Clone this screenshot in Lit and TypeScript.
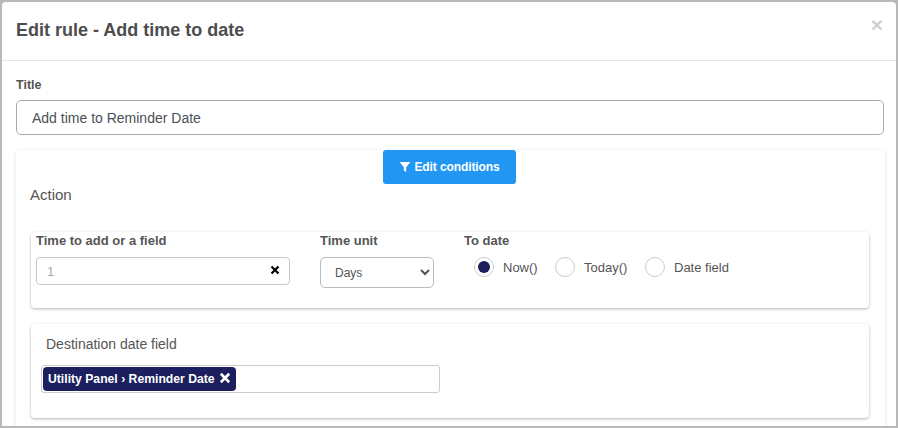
import { LitElement, html, css } from "lit";
import { customElement } from "lit/decorators.js";

@customElement("app-root")
export class AppRoot extends LitElement {
  static styles = css`
    :host {
      display: block;
      width: 898px;
      height: 428px;
      box-sizing: border-box;
      overflow: hidden;
      background: #b9b9b9;
      padding: 2px 2px 2px 2px;
      font-family: "Liberation Sans", Arial, sans-serif;
      color: #555;
    }
    * { box-sizing: border-box; }
    .modal {
      height: 424px;
      background: #fff;
      border-radius: 4px 4px 0 0;
      overflow: hidden;
    }
    .header {
      height: 59px;
      border-bottom: 1px solid #e5e5e5;
      display: flex;
      justify-content: space-between;
      align-items: flex-start;
      padding: 0 13px 0 14px;
    }
    h4 {
      margin: 18px 0 0;
      font-size: 18px;
      line-height: 20px;
      font-weight: 700;
      color: #4d4d4d;
    }
    .close {
      margin-top: 12px;
      font-size: 21px;
      line-height: 21px;
      font-weight: 700;
      color: #cfcfcf;
    }
    .body { padding: 16px 12px 0 14px; }
    .title-label {
      font-size: 12.5px;
      line-height: 16px;
      font-weight: 700;
      color: #555;
      margin-bottom: 7px;
    }
    .title-input {
      height: 35px;
      border: 1px solid #aaa;
      border-radius: 5px;
      padding-left: 15px;
      display: flex;
      align-items: center;
      font-size: 14px;
      color: #495057;
      margin-bottom: 15px;
    }
    .outer {
      height: 300px;
      border-radius: 4px;
      box-shadow: 0 1px 4px rgba(0,0,0,.12);
      padding: 0 16px 0 15px;
      margin-right: -1px;
    }
    .btn-row { display: flex; justify-content: center; }
    .btn {
      width: 133px;
      height: 34px;
      margin-left: -1px;
      background: #2196f3;
      color: #fff;
      border-radius: 3px;
      font-size: 12px;
      letter-spacing: -0.1px;
      font-weight: 700;
      display: flex;
      align-items: center;
      justify-content: center;
      gap: 3px;
    }
    .btn svg { width: 12px; height: 12px; }
    .action {
      font-size: 15px;
      line-height: 16px;
      color: #555;
      margin-top: 3px;
      margin-bottom: 29px;
      margin-left: -1px;
    }
    .card {
      border-radius: 4px;
      box-shadow: 0 1px 3px rgba(0,0,0,.3);
    }
    .card1 {
      height: 76px;
      padding: 1px 5px 0;
      display: flex;
      margin-bottom: 16px;
    }
    .lbl {
      font-size: 13px;
      line-height: 16px;
      font-weight: 700;
      color: #555;
      margin-bottom: 8px;
    }
    .col1 { width: 284px; }
    .col2 { width: 144px; }
    .text-input {
      width: 254px;
      height: 28px;
      border: 1px solid #c8c8c8;
      border-radius: 4px;
      padding: 0 9px 0 10px;
      display: flex;
      align-items: center;
      justify-content: space-between;
      font-size: 13px;
      color: #aaa;
    }
    .clear { color: #000; display: flex; }
    .clear svg { width: 10px; height: 10px; margin-top: -3px; }
    select {
      width: 114px;
      height: 31px;
      border: 1px solid #b4bcc4;
      border-radius: 5px;
      padding-left: 10px;
      background: #fff;
      font-family: inherit;
      font-size: 12px;
      color: #555;
      display: block;
    }
    .radios {
      display: flex;
      align-items: center;
      padding-left: 10px;
      margin-top: 0;
      font-size: 13px;
      color: #555;
    }
    .radio {
      width: 20px;
      height: 20px;
      border-radius: 50%;
      border: 1px solid #ccc;
      display: flex;
      align-items: center;
      justify-content: center;
      margin-right: 9px;
      flex: none;
    }
    .radio i {
      width: 12px;
      height: 12px;
      border-radius: 50%;
      background: #1b1f5e;
      display: block;
    }
    .r1 { width: 35px; margin-right: 17px; }
    .r2 { width: 44px; margin-right: 17px; }
    .card2 {
      height: 94px;
      padding: 12px 10px 0;
    }
    .dest {
      font-size: 14px;
      line-height: 16px;
      color: #555;
      padding-left: 5px;
      margin-bottom: 13px;
    }
    .tags {
      width: 399px;
      height: 28px;
      border: 1px solid #ccc;
      border-radius: 3px;
      padding: 1px;
      display: flex;
    }
    .tag {
      width: 193px;
      height: 24px;
      background: #1b1f5e;
      color: #fff;
      border-radius: 4px;
      padding-left: 5px;
      display: flex;
      align-items: center;
      gap: 4px;
      font-size: 12.2px;
      font-weight: 700;
      white-space: nowrap;
    }
    .tag svg { width: 12px; height: 12px; margin-top: -2px; }
  `;

  render() {
    const x = html`<svg viewBox="0 0 10 10"><path d="M1.5 1.5L8.5 8.5M8.5 1.5L1.5 8.5" stroke="currentColor" stroke-width="2.2" fill="none"/></svg>`;
    return html`
      <div class="modal">
        <div class="header">
          <h4>Edit rule - Add time to date</h4>
          <span class="close">×</span>
        </div>
        <div class="body">
          <div class="title-label">Title</div>
          <div class="title-input">Add time to Reminder Date</div>
          <div class="outer">
            <div class="btn-row">
              <div class="btn">
                <svg viewBox="0 0 12 12"><path d="M.6 1h10.8L7.2 6.2V11L4.8 9.4V6.2z" fill="#fff"/></svg>
                <span>Edit conditions</span>
              </div>
            </div>
            <div class="action">Action</div>
            <div class="card card1">
              <div class="col1">
                <div class="lbl">Time to add or a field</div>
                <div class="text-input"><span>1</span><span class="clear">${x}</span></div>
              </div>
              <div class="col2">
                <div class="lbl">Time unit</div>
                <select><option>Days</option></select>
              </div>
              <div>
                <div class="lbl">To date</div>
                <div class="radios">
                  <span class="radio"><i></i></span><span class="r1">Now()</span>
                  <span class="radio"></span><span class="r2">Today()</span>
                  <span class="radio"></span><span>Date field</span>
                </div>
              </div>
            </div>
            <div class="card card2">
              <div class="dest">Destination date field</div>
              <div class="tags">
                <div class="tag"><span>Utility Panel › Reminder Date</span>${x}</div>
              </div>
            </div>
          </div>
        </div>
      </div>
    `;
  }
}
